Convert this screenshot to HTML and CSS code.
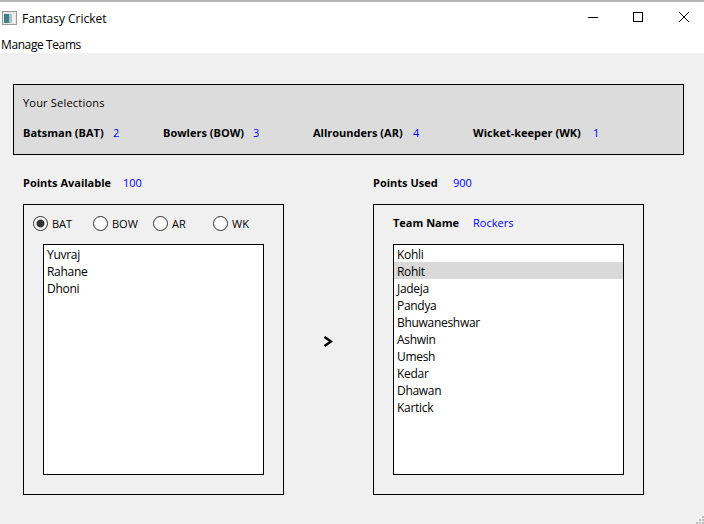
FILE: index.html
```html
<!DOCTYPE html>
<html lang="en">
<head>
    <meta charset="UTF-8">
    <meta name="viewport" content="width=device-width, initial-scale=1.0">
    <title>Fantasy Cricket</title>
    <link rel="stylesheet" href="styles.css">
</head>
<body>
    <div class="window">
        <header class="titlebar">
            <svg class="app-icon" width="15" height="14" viewBox="0 0 15 14">
                <rect x="0.5" y="0.5" width="14" height="13" fill="#e8e8e8" stroke="#9a9a9a"/>
                <rect x="2" y="3" width="5" height="9" fill="#3f7f86"/>
                <rect x="7" y="3" width="3" height="9" fill="#a9c4c8"/>
                <rect x="10" y="3" width="3" height="9" fill="#f2f2f2"/>
            </svg>
            <span class="app-title">Fantasy Cricket</span>
            <div class="window-controls">
                <svg width="10" height="10" viewBox="0 0 10 10"><path d="M0 5.5H10" stroke="#000" fill="none"/></svg>
                <svg class="maximize" width="10" height="10" viewBox="0 0 10 10"><rect x="0.5" y="0.5" width="9" height="9" stroke="#000" fill="none"/></svg>
                <svg width="10" height="10" viewBox="0 0 10 10"><path d="M0 0L10 10M10 0L0 10" stroke="#000" fill="none"/></svg>
            </div>
        </header>
        <nav class="menubar">Manage Teams</nav>

        <main class="content">
            <section class="selections">
                <h2 class="selections-title">Your Selections</h2>
                <div class="selections-grid">
                    <span class="label">Batsman (BAT)</span><span class="value">2</span>
                    <span class="label">Bowlers (BOW)</span><span class="value">3</span>
                    <span class="label">Allrounders (AR)</span><span class="value">4</span>
                    <span class="label">Wicket-keeper (WK)</span><span class="value">1</span>
                </div>
            </section>

            <div class="columns">
                <section class="column column-left">
                    <div class="points">
                        <span class="label">Points Available</span><span class="value">100</span>
                    </div>
                    <div class="box">
                        <div class="box-head radios">
                            <span class="radio radio-on">BAT</span>
                            <span class="radio">BOW</span>
                            <span class="radio">AR</span>
                            <span class="radio">WK</span>
                        </div>
                        <ul class="players">
                            <li>Yuvraj</li>
                            <li>Rahane</li>
                            <li>Dhoni</li>
                        </ul>
                    </div>
                </section>

                <div class="move">
                    <svg width="10" height="11" viewBox="0 0 10 11"><path d="M1.5 1L8 5.5L1.5 10" stroke="#000" stroke-width="2.4" fill="none"/></svg>
                </div>

                <section class="column column-right">
                    <div class="points">
                        <span class="label">Points Used</span><span class="value">900</span>
                    </div>
                    <div class="box">
                        <div class="box-head team">
                            <span class="label">Team Name</span><span class="value">Rockers</span>
                        </div>
                        <ul class="players">
                            <li>Kohli</li>
                            <li class="selected">Rohit</li>
                            <li>Jadeja</li>
                            <li>Pandya</li>
                            <li>Bhuwaneshwar</li>
                            <li>Ashwin</li>
                            <li>Umesh</li>
                            <li>Kedar</li>
                            <li>Dhawan</li>
                            <li>Kartick</li>
                        </ul>
                    </div>
                </section>
            </div>
        </main>

        <svg class="grip" width="8" height="8" viewBox="0 0 8 8" fill="#bdbdbd">
            <rect x="6" y="0" width="2" height="2"/>
            <rect x="3" y="3" width="2" height="2"/>
            <rect x="6" y="3" width="2" height="2"/>
            <rect x="0" y="6" width="2" height="2"/>
            <rect x="3" y="6" width="2" height="2"/>
            <rect x="6" y="6" width="2" height="2"/>
        </svg>
    </div>
</body>
</html>
```

FILE: styles.css
```css
/* Fantasy Cricket window */
* {
    box-sizing: border-box;
}
body {
    margin: 0;
    font-family: "Open Sans", "Noto Sans", sans-serif;
    font-size: 12px;
    color: #000;
    background-color: #f0f0f0;
}
.window {
    position: relative;
    width: 704px;
    height: 524px;
    overflow: hidden;
    background-color: #f0f0f0;
}
.titlebar {
    display: flex;
    align-items: center;
    height: 33px;
    padding: 1px 0 0 2px;
    background: white;
    border-top: 2px solid #b4b4b4;
}
.app-icon {
    margin-right: 5px;
}
.window-controls {
    display: flex;
    gap: 35px;
    margin-left: auto;
    margin-right: 15px;
    margin-bottom: 2px;
}
.maximize {
    margin-right: 1px;
}
.menubar {
    height: 20px;
    padding-left: 1px;
    line-height: 24px;
    letter-spacing: -0.4px;
    background: white;
}
.content {
    padding: 31px 20px 0 13px;
}
.selections {
    width: 671px;
    height: 71px;
    padding: 9px 9px 0;
    background-color: #dcdcdc;
    border: 1px solid black;
}
.selections-title {
    margin: 0 0 13px;
    font-size: 11px;
    font-weight: normal;
    line-height: 17px;
    letter-spacing: 0.2px;
}
.selections-grid {
    display: grid;
    grid-template-columns: 90px 50px 90px 60px 100px 60px 120px auto;
    line-height: 17px;
}
.label {
    font-size: 11px;
    font-weight: bold;
}
.value {
    font-size: 11px;
    color: #0000ff;
}
.columns {
    display: flex;
    padding-left: 10px;
}
.column-left {
    width: 261px;
}
.column-right {
    width: 271px;
}
.points {
    display: grid;
    grid-template-columns: 100px auto;
    align-items: center;
    height: 49px;
    padding-top: 5px;
}
.column-right .points {
    grid-template-columns: 80px auto;
}
.box {
    height: 291px;
    padding: 0 19px;
    background-color: #f0f0f0;
    border: 1px solid black;
}
.box-head {
    display: grid;
    align-items: center;
    height: 36px;
    margin-bottom: 3px;
}
.radios {
    grid-template-columns: repeat(4, 60px);
    margin-left: -10px;
}
.team {
    grid-template-columns: 80px auto;
    padding-bottom: 2px;
}
.radio {
    display: flex;
    align-items: center;
    gap: 4px;
    font-size: 11px;
}
.radio::before {
    content: "";
    width: 13px;
    height: 13px;
    background: white;
    border: 1px solid #333;
    border-radius: 50%;
}
.radio-on::before {
    background: radial-gradient(circle, #333 0, #333 3.5px, white 4.5px);
}
.players {
    height: 231px;
    margin: 0;
    padding: 0;
    list-style: none;
    background: white;
    border: 1px solid black;
}
.players li {
    height: 17px;
    padding-left: 3px;
    line-height: 19px;
    letter-spacing: -0.3px;
}
.players .selected {
    background-color: #d9d9d9;
}
.move {
    display: flex;
    align-items: center;
    justify-content: center;
    width: 89px;
    padding: 32px 2px 0 0;
}
.grip {
    position: absolute;
    right: 0;
    bottom: 0;
}
```
